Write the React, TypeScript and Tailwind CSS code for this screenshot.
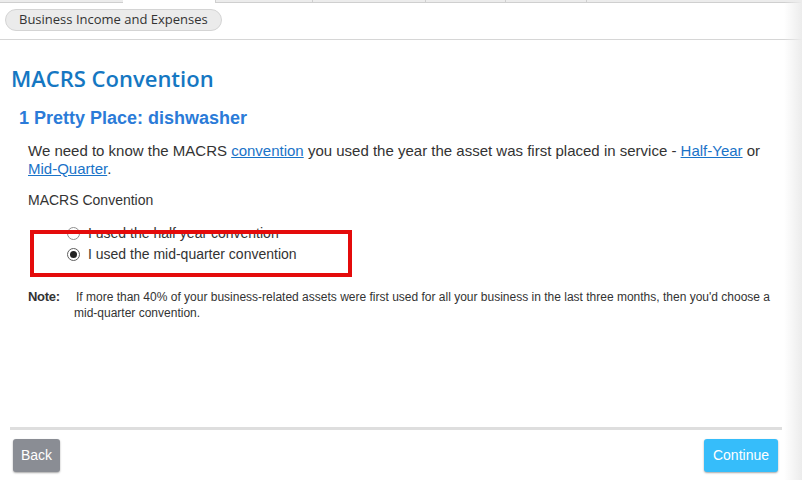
export default function App() {
  const tabs = [123, 92, 97, 113, 80, 81, 216];
  return (
    <div className="relative h-[480px] w-[802px] overflow-hidden bg-white font-['Liberation_Sans',Arial,sans-serif] text-[#333]">
      {/* tab strip remnants */}
      <div className="flex h-[3px]">
        {tabs.map((w, i) => (
          <div
            key={i}
            style={{ width: w }}
            className={
              i === 1
                ? "h-full bg-white"
                : "h-full border-b border-l border-[#cfcfcf] bg-[#ececec] first:border-l-0"
            }
          />
        ))}
      </div>

      <header className="flex h-[37px] items-start border-b border-[#d6d6d6] pl-[5px] pt-[6px]">
        <span className="flex h-[22px] items-center rounded-full border border-[#d4d4d4] bg-[#ebebeb] px-[13px] font-['Open_Sans',sans-serif] text-[13px] text-[#333]">
          Business Income and Expenses
        </span>
      </header>

      <main className="flex h-[387px] flex-col">
        <h1 className="mt-[24px] pl-[11px] font-['Open_Sans',sans-serif] text-[22px] leading-[28px] font-semibold text-[#1577c2]">
          MACRS Convention
        </h1>
        <h2 className="mt-[15px] pl-[19px] text-[18px] leading-[22px] font-bold text-[#2b7bd8]">
          1 Pretty Place: dishwasher
        </h2>

        <div className="pl-[28px] pr-[16px]">
          <p className="mt-[13px] pr-[24px] text-[15px] leading-[18px]">
            We need to know the MACRS{" "}
            <a className="text-[#1a73c8] underline">convention</a> you used the
            year the asset was first placed in service -{" "}
            <a className="text-[#1a73c8] underline">Half-Year</a> or{" "}
            <a className="text-[#1a73c8] underline">Mid-Quarter</a>.
          </p>

          <div className="mt-[13px] text-[14px] leading-[18px]">MACRS Convention</div>

          <div className="relative mt-[16px] flex flex-col gap-[4px] pl-[39px] text-[14px] leading-[17px]">
            <label className="flex items-center gap-[8px]">
              <span className="h-[13px] w-[13px] rounded-full border border-[#8f8f8f] bg-white" />
              I used the half year convention
            </label>
            <label className="flex items-center gap-[8px]">
              <span className="flex h-[13px] w-[13px] items-center justify-center rounded-full border border-[#5f5f5f] bg-white">
                <span className="h-[7px] w-[7px] rounded-full bg-[#222]" />
              </span>
              I used the mid-quarter convention
            </label>
            {/* highlight box drawn over the options */}
            <div className="pointer-events-none absolute left-[2px] top-[5px] h-[47px] w-[322px] border-[4px] border-[#e40b0b]" />
          </div>

          <div className="mt-[26px] flex text-[12px] leading-[16px]">
            <span className="w-[46px] shrink-0 text-[13px] font-bold tracking-[-0.3px]">Note:</span>
            <p className="indent-[2px]">
              If more than 40% of your business-related assets were first used for all your business in the last three months, then you'd choose a mid-quarter convention.
            </p>
          </div>
        </div>
      </main>

      <footer className="mx-[10px] flex w-[772px] justify-between border-t-[3px] border-[#dedede] pl-[3px] pr-[4px] pt-[9px]">
        <button className="h-[33px] rounded-[3px] bg-[#8a8d94] px-[8px] text-[14px] text-white shadow-[0_1px_2px_rgba(0,0,0,0.35)]">
          Back
        </button>
        <button className="h-[33px] rounded-[3px] bg-[#36bdfa] px-[9px] text-[14px] text-white shadow-[0_1px_2px_rgba(0,0,0,0.35)]">
          Continue
        </button>
      </footer>

      {/* right edge shade */}
      <div className="pointer-events-none absolute right-0 top-0 h-full w-[18px] bg-gradient-to-r from-white/0 to-[#ececec]" />
    </div>
  );
}
